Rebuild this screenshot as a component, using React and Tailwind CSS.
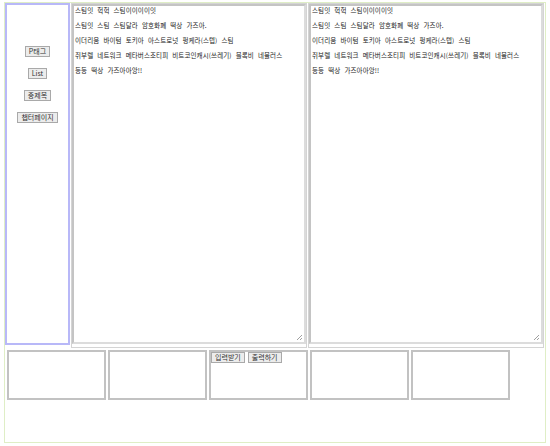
import React from "react";

const memo = [
  "스팀잇 헉헉 스팀이이이이잇",
  "스팀잇 스팀 스팀달라 암호화폐 떡상 가즈아.",
  "이더리움 바이텀 토키아 아스트로넛 펑케라(스텝) 스팀",
  "쥐부렐 네트워크 메타버스조티피 비트코인캐시(쓰레기) 블록비 네뷸러스",
  "등등 떡상 가즈아아앙!!",
];

const font = { fontFamily: '"Noto Sans CJK KR", "Liberation Sans", sans-serif' };

function SmallButton({ children }) {
  return (
    <button className="h-[11px] px-[3px] bg-[#ececec] border border-[#a9a9a9] text-[7px] leading-[9px] text-[#333] whitespace-nowrap">
      {children}
    </button>
  );
}

function Memo() {
  return (
    <div className="w-[236px] h-[345px] border border-[#d4d4d4] pb-[3px] bg-white">
      <div className="relative w-full h-full border-2 border-[#c4c4c4] border-b-[#dcdcdc] border-r-[#dcdcdc] overflow-hidden">
        <div className="-mt-[3px] pl-[1px] text-[6.5px] leading-[15px] text-[#222] tracking-[0.1px] [word-spacing:2.5px] whitespace-nowrap">
          {memo.map((line) => (
            <div key={line}>{line}</div>
          ))}
        </div>
        {/* resize grip */}
        <svg className="absolute right-[1px] bottom-[1px]" width="7" height="7" viewBox="0 0 7 7">
          <path d="M6 1L1 6M6 4L4 6" stroke="#a0a0a0" strokeWidth="1" />
        </svg>
      </div>
    </div>
  );
}

export default function App() {
  return (
    <div className="bg-white w-[550px] h-[446px]" style={font}>
      <div className="ml-[4px] pt-[2px]">
        <div className="w-[542px] h-[441px] border border-[#dfeec6] flex flex-col">
          <div className="flex gap-[1px]">
            <div className="w-[65px] h-[342px] border-2 border-[#b8b8f8] flex flex-col items-center pt-[41px] gap-[11px]">
              <SmallButton>P태그</SmallButton>
              <SmallButton>List</SmallButton>
              <SmallButton>중제목</SmallButton>
              <SmallButton>챕터페이지</SmallButton>
            </div>
            <Memo />
            <Memo />
          </div>
          <div className="flex gap-[2px] pl-[2px] mt-[2px]">
            <div className="w-[99px] h-[50px] border-2 border-[#c2c2c2]" />
            <div className="w-[99px] h-[50px] border-2 border-[#c2c2c2]" />
            <div className="w-[99px] h-[50px] border-2 border-[#c2c2c2] flex items-start gap-[3px]">
              <SmallButton>입력받기</SmallButton>
              <SmallButton>출력하기</SmallButton>
            </div>
            <div className="w-[99px] h-[50px] border-2 border-[#c2c2c2]" />
            <div className="w-[99px] h-[50px] border-2 border-[#c2c2c2]" />
          </div>
        </div>
      </div>
    </div>
  );
}
